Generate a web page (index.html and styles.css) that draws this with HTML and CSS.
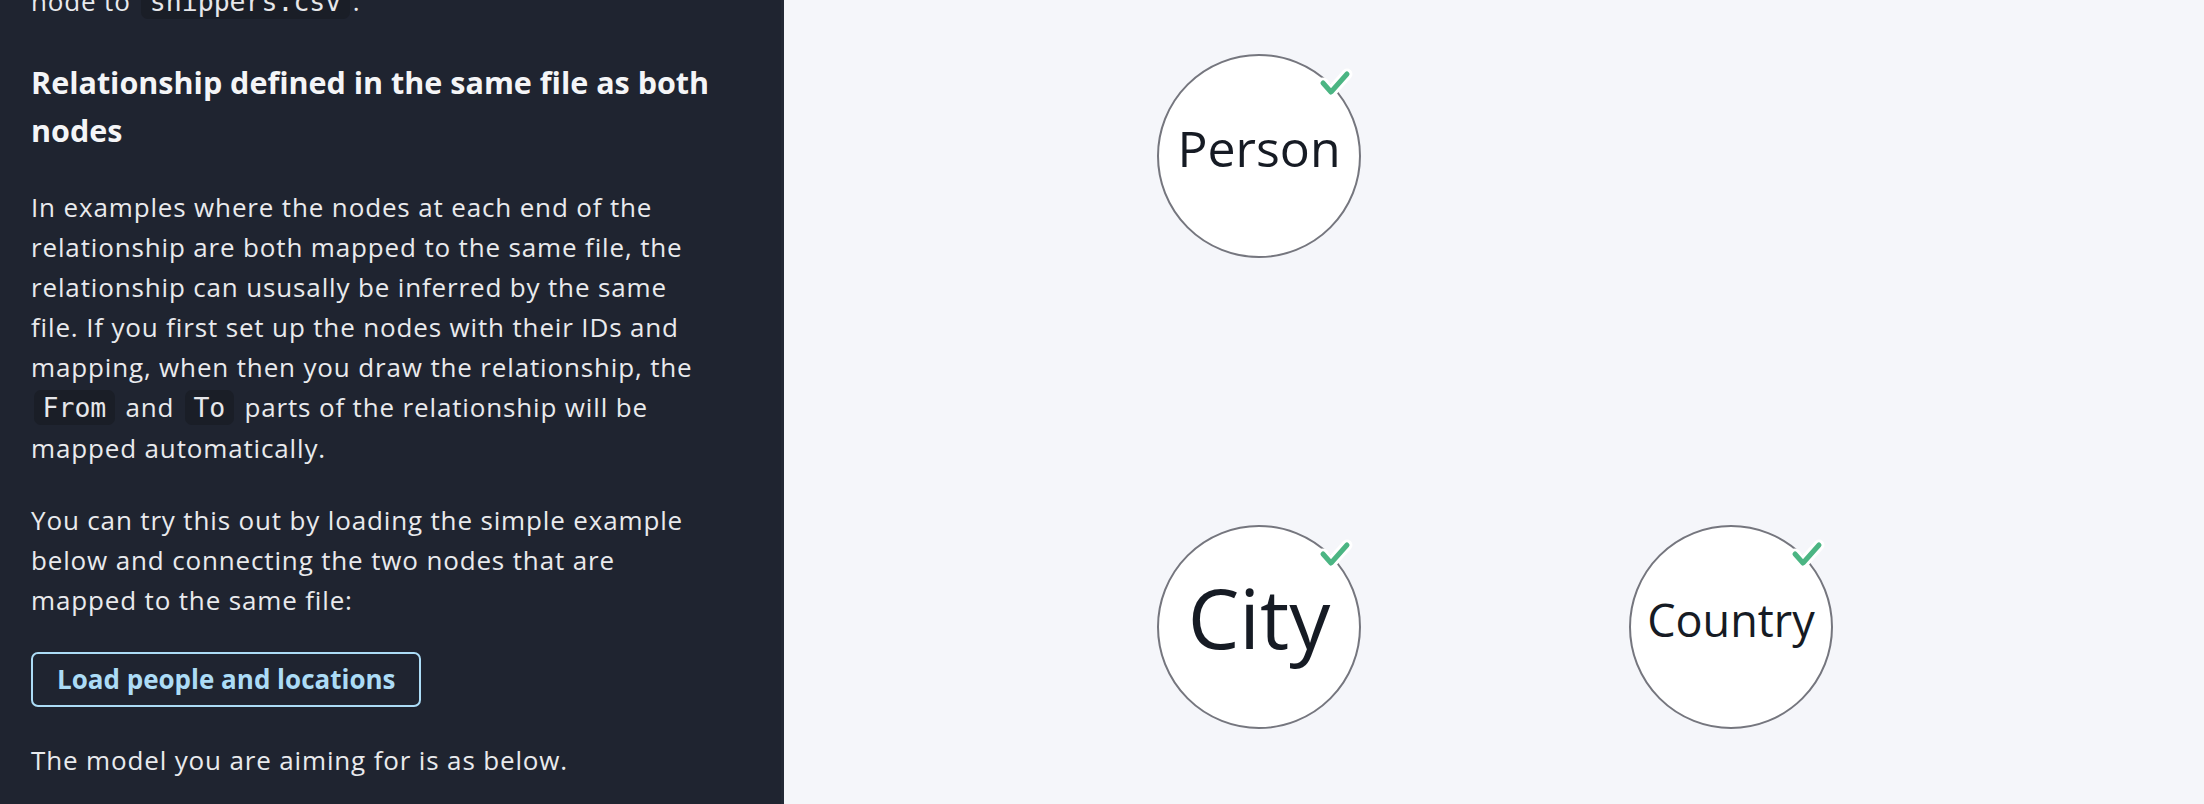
FILE: index.html
```html
<!DOCTYPE html>
<html lang="en">
<head>
<meta charset="utf-8">
<title>Import guide</title>
<link rel="stylesheet" href="styles.css">
</head>
<body>
<div class="app">
  <aside class="guide">
    <div class="guide-content">
      <p class="lead-cut">node to <code>shippers.csv</code>.</p>
      <h3>Relationship defined in the same file as both nodes</h3>
      <p>In examples where the nodes at each end of the relationship are both mapped to the same file, the relationship can ususally be inferred by the same file. If you first set up the nodes with their IDs and mapping, when then you draw the relationship, the <code>From</code> and <code>To</code> parts of the relationship will be mapped automatically.</p>
      <p>You can try this out by loading the simple example below and connecting the two nodes that are mapped to the same file:</p>
      <div class="actions"><button class="load-btn">Load people and locations</button></div>
      <p>The model you are aiming for is as below.</p>
    </div>
  </aside>
  <main class="canvas">
    <div class="node node-person">
      <span class="label" style="font-size:50px">Person</span>
      <svg class="check" viewBox="0 0 40 36" width="40" height="36"><polyline points="8,17 16,26 32,8" class="check-halo"/><polyline points="8,17 16,26 32,8" class="check-mark"/></svg>
    </div>
    <div class="node node-city">
      <span class="label label-big" style="font-size:82px">City</span>
      <svg class="check" viewBox="0 0 40 36" width="40" height="36"><polyline points="8,17 16,26 32,8" class="check-halo"/><polyline points="8,17 16,26 32,8" class="check-mark"/></svg>
    </div>
    <div class="node node-country">
      <span class="label" style="font-size:45px">Country</span>
      <svg class="check" viewBox="0 0 40 36" width="40" height="36"><polyline points="8,17 16,26 32,8" class="check-halo"/><polyline points="8,17 16,26 32,8" class="check-mark"/></svg>
    </div>
  </main>
</div>
</body>
</html>
```
FILE: styles.css
```css
* { box-sizing: border-box; }
html, body { margin: 0; padding: 0; height: 100%; }
body {
  font-family: "Open Sans", "Noto Sans", sans-serif;
  background: #f5f6fa;
  overflow: hidden;
}
.app {
  display: flex;
  height: 804px;
}
.guide {
  width: 784px;
  flex: 0 0 784px;
  background: #1f2430;
  border-right: 3px solid #232935;
  color: #e9eaed;
  overflow: hidden;
}
.guide-content {
  padding: 0 61px 0 31px;
}
.guide p {
  margin: 0 0 32px;
  font-size: 26px;
  line-height: 40px;
  letter-spacing: 0.85px;
}
.guide p.lead-cut {
  margin-top: -19px;
}
.guide h3 {
  margin: 36px 0 33px;
  font-size: 30.5px;
  line-height: 48px;
  font-weight: 700;
  color: #f4f5f7;
}
.guide code {
  font-family: "DejaVu Sans Mono", monospace;
  font-size: 26.5px;
  letter-spacing: 0;
  background: #1a1e27;
  border-radius: 7px;
  padding: 2px 8.5px;
  margin: 0 3px;
  color: #e6e7ea;
}
.actions {
  margin: 0 0 33px;
}
.load-btn {
  font-family: "Open Sans", "Noto Sans", sans-serif;
  font-size: 26px;
  font-weight: 700;
  line-height: 35px;
  color: #acdcf6;
  background: transparent;
  border: 2px solid #acdcf6;
  border-radius: 7px;
  padding: 8px 23px 8px 24px;
  height: 55px;
  cursor: pointer;
}
.canvas {
  flex: 1;
  position: relative;
  background: #f5f6fa;
}
.node {
  position: absolute;
  width: 204px;
  height: 204px;
  border-radius: 50%;
  background: #ffffff;
  border: 2px solid #75767e;
  display: flex;
  align-items: center;
  justify-content: center;
}
.node-person { left: 373px; top: 54px; }
.node-city { left: 373px; top: 525px; }
.node-country { left: 845px; top: 525px; }
.label {
  font-family: "Open Sans", "Noto Sans", sans-serif;
  color: #161b24;
  line-height: 1;
  transform: translateY(-8px);
}
.label-big {
  transform: translateY(-10px);
}
.check {
  position: absolute;
  left: 156px;
  top: 10px;
  overflow: visible;
}
.check polyline {
  fill: none;
  stroke-linecap: round;
  stroke-linejoin: round;
}
.check-halo { stroke: #ffffff; stroke-width: 11; }
.check-mark { stroke: #4bb583; stroke-width: 5; }
```
